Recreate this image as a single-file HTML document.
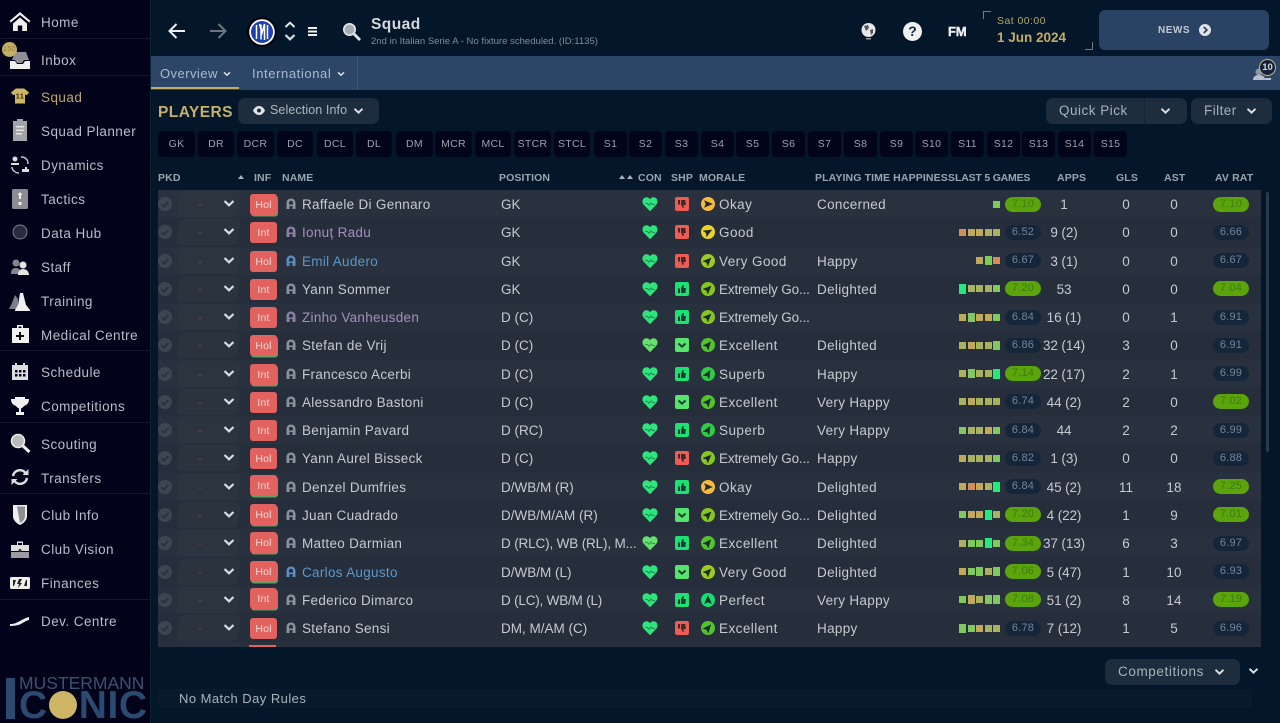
<!DOCTYPE html>
<html><head><meta charset="utf-8"><title>Squad</title>
<style>
html,body{margin:0;padding:0;width:1280px;height:723px;overflow:hidden;background:#03162a}
body{position:relative;font-family:"Liberation Sans","DejaVu Sans",sans-serif;color:#c6cad0;font-size:13.5px;letter-spacing:.45px;filter:blur(.35px)}
svg{display:block}
#side{position:absolute;left:0;top:0;width:150px;height:723px;background:#02021a}
.m{position:absolute;left:41px;margin-top:1px;color:#b9bcc6;font-size:13.5px;line-height:20px;white-space:nowrap;letter-spacing:.45px}
.ic{position:absolute;left:8px;width:24px;height:24px}
.hr{position:absolute;left:0;width:150px;height:1px;background:#15182d}
.h{position:absolute;top:172px;font-size:10.5px;font-weight:bold;color:#9aa4ae;line-height:12px;white-space:nowrap;letter-spacing:.12px}
.c{position:absolute;top:131px;height:26px;background:#02051a;border-radius:4px;color:#9aa2ac;font-size:10.5px;line-height:26px;text-align:center;letter-spacing:.3px}
.r{position:absolute;left:158px;width:1103px;height:28.27px;line-height:30px;background:#28313d;overflow:hidden}
.r.e{background:#252e3a}
.r>*{position:absolute;white-space:nowrap}
.k{left:0;top:7px;width:14px;height:14px}
.s{left:20px;top:1px;width:61px;height:26px;background:#2d3642;border-radius:5px;transform:skewX(-8deg);opacity:.75}
.d{left:40px;color:#8a3c3c;font-size:12px;line-height:28px}
.v{left:65px;top:9px;width:12px;height:9px}
.f{left:92px;top:4px;width:27px;height:21px;background:#e2625f;border-radius:3px;color:#f1d9d6;font-size:10.5px;line-height:22px;text-align:center;letter-spacing:.2px}
.f.g{box-shadow:1px 1.5px 0 #5f9f63}
.pi{left:127px;top:8px;width:12px;height:12px}
.n{left:144px;color:#c6cad0;letter-spacing:.3px}
.n.u{color:#a68fbe}.n.b{color:#5b97cc}
.p{left:343px;letter-spacing:0}
.he{left:484px;top:6px;width:16px;height:16px}
.sh{left:517px;top:7px;width:14px;height:14px}
.mi{left:543px;top:7px;width:14px;height:14px}
.mt{left:561px}
.z{letter-spacing:-.15px}
.pt{left:659px;letter-spacing:.32px}
.l{left:742px;top:0;width:100px;height:28px;display:flex;justify-content:flex-end;align-items:center;gap:1.5px}
.l i{display:block;width:7px;height:7px}
.o{background:#d68d54}.y{background:#c2a958}.w{background:#a9b25f}.q{background:#80c95c}.t{background:#22ea7c;height:10px!important}
.rt{left:847px;top:6.5px;width:36px;height:15px;border-radius:8px;background:#15263a;color:#75849a;font-size:11px;line-height:14px;text-align:center;letter-spacing:.2px}
.rt.G{background:#5ba40a;color:#3c7d10}
.rt.A{left:1055px}
.x{width:60px;text-align:center;letter-spacing:.1px}
.ap{left:876px;letter-spacing:-.1px}.gl{left:938px}.as{left:986px}
.btn{position:absolute;background:#1e2d3e;border-radius:7px;color:#aeb6bf;line-height:26px;height:26px;font-size:13.5px}
</style></head><body>
<svg width="0" height="0" style="position:absolute"><defs>
<symbol id="heart" viewBox="0 0 16 16"><path fill="#2fe47c" d="M8 15.2 1.6 8.6C-.3 6.4.2 2.8 2.8 1.6 4.900.7 6.900 1.500 8 3.200 9.100 1.500 11.100.7 13.200 1.600c2.600 1.200 3.100 4.800 1.200 7z"/><path fill="none" stroke="#1b8f55" stroke-width="1" d="M3 7.500h2.500l1.500 1.800 2-2.400 1.500 1.600H13"/></symbol>
<symbol id="heart2" viewBox="0 0 16 16"><path fill="#68e071" d="M8 15.200 1.600 8.600C-.3 6.400.2 2.800 2.800 1.600 4.900.7 6.900 1.500 8 3.200 9.100 1.500 11.100.7 13.200 1.600c2.600 1.200 3.100 4.800 1.200 7z"/><path fill="none" stroke="#37954a" stroke-width="1" d="M3 7.500h2.500l1.500 1.800 2-2.400 1.500 1.600H13"/></symbol>
<symbol id="up" viewBox="0 0 14 14"><rect width="14" height="14" rx="2" fill="#1be273"/><path fill="#1d3a36" d="M3 6.500h2v4.500H3zM6 6.500 7.700 3c.9 0 1.300.6 1.100 1.500L8.500 6H11l-.7 5H6z"/></symbol>
<symbol id="dn" viewBox="0 0 14 14"><rect width="14" height="14" rx="2" fill="#ee5c52"/><path fill="#3d2a2e" d="M3 3h2v4.500H3zM6 3h4.300L11 8H8.500l.3 1.500C9 10.400 8.600 11 7.700 11L6 7.500z"/></symbol>
<symbol id="mid" viewBox="0 0 14 14"><rect width="14" height="14" rx="2" fill="#55e46d"/><path fill="none" stroke="#1d3a36" stroke-width="2" d="M3.500 5.500 7 8.700l3.500-3.200"/></symbol>
<symbol id="nav" viewBox="0 0 14 14"><path fill="#1e2a30" d="M7 2.200 10.800 11 7 9.300 3.200 11z"/></symbol>
<symbol id="chev" viewBox="0 0 12 9"><path fill="none" stroke="#d8dde2" stroke-width="2.200" d="M1.500 2 6 6.300 10.500 2"/></symbol>
<symbol id="chk" viewBox="0 0 14 14"><circle cx="7" cy="7" r="7" fill="#3d4650"/><path fill="none" stroke="#28313d" stroke-width="1.800" d="M3.500 7.200 6 9.700 10.500 4.800"/></symbol>
<symbol id="per" viewBox="0 0 12 12"><path fill="#8a939d" d="M6 .5C3.200.5 1.500 2.500 1.500 5.200V11h3V8h3v3h3V5.200C10.500 2.500 8.800.5 6 .5zM4 6.500V5C4 3.800 4.800 2.800 6 2.800S8 3.800 8 5v1.500z"/></symbol>
<symbol id="perb" viewBox="0 0 12 12"><path fill="#5b8fc0" d="M6 .5C3.200.5 1.500 2.500 1.500 5.200V11h3V8h3v3h3V5.200C10.500 2.500 8.800.5 6 .5zM4 6.500V5C4 3.800 4.800 2.800 6 2.800S8 3.800 8 5v1.500z"/></symbol>
<symbol id="perp" viewBox="0 0 12 12"><path fill="#8f7ea6" d="M6 .5C3.200.5 1.500 2.500 1.500 5.200V11h3V8h3v3h3V5.200C10.500 2.500 8.800.5 6 .5zM4 6.500V5C4 3.800 4.800 2.800 6 2.800S8 3.800 8 5v1.500z"/></symbol>
</defs></svg>

<div id="side">
<svg class="ic" style="top:9px" viewBox="0 0 24 24"><path fill="#eee" d="M12 3 1.500 12l1.300 1.500L12 6l9.200 7.500 1.300-1.500zM5 14.500 12 8.500l7 6V22h-4.800v-5.500H9.800V22H5z"/></svg>
<div class="m" style="top:12px">Home</div><div class="hr" style="top:38px"></div>
<svg class="ic" style="top:47px" viewBox="0 0 24 24"><path fill="#eee" d="M2 14h5l2 3h6l2-3h5v8H2z"/><path fill="#8e8e96" d="M7 5h11l3 8h-5l-2 3h-5l-2-3H4z"/></svg>
<div style="position:absolute;left:2px;top:42px;width:15px;height:15px;border-radius:50%;background:#c4ad66;color:#927e40;font-size:7px;line-height:15px;text-align:center">150</div>
<div class="m" style="top:50px">Inbox</div><div class="hr" style="top:75px"></div>
<svg class="ic" style="top:86px;left:10px;width:20px;height:20px" viewBox="0 0 24 24"><path fill="#d0b565" d="M7 3h10l6 5-3 3-2-1v11H6V10l-2 1-3-3z"/><text x="12" y="15" fill="#3a3216" font-size="9" font-weight="bold" text-anchor="middle" font-family="Liberation Sans">11</text></svg>
<div class="m" style="top:87px;color:#bba96c">Squad</div>
<svg class="ic" style="top:117px" viewBox="0 0 24 24"><path fill="#a3a3a8" d="M5 4h4V2h6v2h4v20H5z"/><path fill="#e5e5e5" d="M8 9h8v1.500H8zM8 12.500h8V14H8zM8 16h6v1.500H8z"/></svg>
<div class="m" style="top:121px">Squad Planner</div>
<svg class="ic" style="top:153px" viewBox="0 0 24 24"><circle cx="7" cy="6" r="2.500" fill="#ddd"/><path fill="#ddd" d="M3 10h8v2H3zM14 16h3v-2h2v2h2v3h-7z"/><path fill="none" stroke="#c9c9cc" stroke-width="1.500" d="M13 4c4 0 7 2 7 7M4 14c0 3 3 6 7 6"/></svg>
<div class="m" style="top:155px">Dynamics</div>
<svg class="ic" style="top:187px" viewBox="0 0 24 24"><rect x="4" y="2" width="16" height="20" rx="1.500" fill="#8b8b91"/><path fill="#eee" d="M12 5l2.500 3H13v4h-2V8H9.500zM10.500 15h3v3h-3z"/></svg>
<div class="m" style="top:189px">Tactics</div>
<svg class="ic" style="top:220px" viewBox="0 0 24 24"><circle cx="12" cy="12" r="7" fill="#2b2b40" stroke="#7e7e8a" stroke-width="1"/></svg>
<div class="m" style="top:223px">Data Hub</div>
<svg class="ic" style="top:255px" viewBox="0 0 24 24"><circle cx="8" cy="8" r="3.500" fill="#85858c"/><path fill="#85858c" d="M3 19c0-5 2-6 5-6 2 0 3 .6 4 2l-2 4z"/><circle cx="15" cy="10" r="3.500" fill="#e5e5e5"/><path fill="#e5e5e5" d="M10 20c0-4 2-6 5-6s6 2 6 6z"/></svg>
<div class="m" style="top:257px">Staff</div>
<svg class="ic" style="top:289px" viewBox="0 0 24 24"><path fill="#7f7f86" d="M1 20 4 14l3-8 3 4v10z"/><path fill="#f0f0f0" d="M12 4h3l3 12 4 5v1H7v-1l3-5z"/></svg>
<div class="m" style="top:291px">Training</div><div class="hr" style="top:350px"></div>
<svg class="ic" style="top:322px" viewBox="0 0 24 24"><path fill="#f0f0f0" d="M9 3h6v3h6v15H4V6h5zm1.500 1.500V6h3V4.500z"/><path fill="#111" d="M11 10h2v3h3v2h-3v3h-2v-3H8v-2h3z"/></svg>
<div class="m" style="top:325px">Medical Centre</div>
<svg class="ic" style="top:360px" viewBox="0 0 24 24"><path fill="#ddd" d="M4 5h3V3h2v2h6V3h2v2h3v15H4z"/><path fill="#02021a" d="M7 10h2.500v2.500H7zM11 10h2.500v2.500H11zM15 10h2.500v2.500H15zM7 14h2.500v2.500H7zM11 14h2.500v2.500H11zM15 14h2.500v2.500H15z"/></svg>
<div class="m" style="top:362px">Schedule</div>
<svg class="ic" style="top:394px" viewBox="0 0 24 24"><path fill="#f0f0f0" d="M7 3h10v2h4c0 4-2 6-5 7-1 1.500-2 2-3 2.500V18h3v3H8v-3h3v-3.500c-1-.5-2-1-3-2.500-3-1-5-3-5-7h4z"/></svg>
<div class="m" style="top:396px">Competitions</div><div class="hr" style="top:422px"></div>
<svg class="ic" style="top:431px" viewBox="0 0 24 24"><circle cx="10" cy="10" r="6.500" fill="#bbb" stroke="#eee" stroke-width="1.500"/><path stroke="#eee" stroke-width="3" d="m15 15 6.500 6"/></svg>
<div class="m" style="top:434px">Scouting</div>
<svg class="ic" style="top:465px" viewBox="0 0 24 24"><path fill="none" stroke="#ddd" stroke-width="2.500" d="M5 11a7 7 0 0 1 12.500-3M19 13a7 7 0 0 1-12.500 3"/><path fill="#ddd" d="M20.500 4v6h-6zM3.500 20v-6h6z"/></svg>
<div class="m" style="top:468px">Transfers</div><div class="hr" style="top:493px"></div>
<svg class="ic" style="top:503px" viewBox="0 0 24 24"><path fill="#eee" d="M5 2h14v11c0 4-3 7-7 9-4-2-7-5-7-9z"/><path fill="#8d8d94" d="M9 3.500h8V13c0 3-2 5.500-5 7z"/></svg>
<div class="m" style="top:505px">Club Info</div>
<svg class="ic" style="top:537px" viewBox="0 0 24 24"><path fill="#ddd" d="M3 8h6V4.500h6V8h6v6H3zM10 6v2h4V6z"/><path fill="#9c9ca2" d="M3 15h18v6H3z"/><circle cx="12" cy="13.500" r="1.500" fill="#333"/></svg>
<div class="m" style="top:539px">Club Vision</div>
<svg class="ic" style="top:571px" viewBox="0 0 24 24"><rect x="2" y="6" width="20" height="12" rx="1.500" fill="#eee"/><path fill="#222" d="M5 9h3l-2 6H5zM19 9v6h-3l2-6zM11 8h3l-2 4h2l-4 5 1-4H9z"/></svg>
<div class="m" style="top:573px">Finances</div><div class="hr" style="top:599px"></div>
<svg class="ic" style="top:609px" viewBox="0 0 24 24"><path fill="#eee" d="M2 15c4 0 6-1 9-2.500C14 11 17 9 21 8v3c-4 1-6 3-9 4.500-3 1-6 1.500-10 1.500z"/></svg>
<div class="m" style="top:611px">Dev. Centre</div>
<div style="position:absolute;left:6px;top:678px;width:9px;height:41px;background:#2c4a70"></div>
<div style="position:absolute;left:19px;top:673px;color:#3a5270;font-size:17.5px;line-height:20px;letter-spacing:0;white-space:nowrap">MUSTERMANN</div>
<div style="position:absolute;left:19px;top:687px;color:#2c4a70;font-size:39px;line-height:38px;font-weight:bold;letter-spacing:.6px;white-space:nowrap">C<span style="opacity:0">O</span>NIC</div>
<div style="position:absolute;left:49px;top:691px;width:28px;height:28px;border-radius:50%;background:#cfb566"></div>
</div>
<div style="position:absolute;left:150px;top:0;width:1px;height:723px;background:#0b2233"></div>

<!-- top -->
<svg style="position:absolute;left:167px;top:22px" width="20" height="18" viewBox="0 0 20 18"><path fill="none" stroke="#eef0f2" stroke-width="2" d="M18 9H3M9.500 2 2.500 9l7 7"/></svg>
<svg style="position:absolute;left:208px;top:22px" width="20" height="18" viewBox="0 0 20 18"><path fill="none" stroke="#6d7680" stroke-width="2" d="M2 9h15M10.500 2l7 7-7 7"/></svg>
<svg style="position:absolute;left:247px;top:17px" width="30" height="30" viewBox="0 0 30 30"><circle cx="15" cy="15" r="15" fill="#03040c"/><circle cx="15" cy="15" r="12.800" fill="#fff"/><circle cx="15" cy="15" r="11" fill="#1e3fae"/><path fill="none" stroke="#fff" stroke-width="1.500" d="M9.500 8v14M12.500 7l2.500 9 2.500-9v16M20.500 8v14M14 7.500v15"/></svg>
<svg style="position:absolute;left:284px;top:20px" width="12" height="9" viewBox="0 0 12 9"><path fill="none" stroke="#e6e9ec" stroke-width="2" d="M1.500 7 6 2.700 10.500 7"/></svg>
<svg style="position:absolute;left:284px;top:33px" width="12" height="9" viewBox="0 0 12 9"><use href="#chev"/></svg>
<div style="position:absolute;left:308px;top:27px;width:9px;height:2px;background:#eee;box-shadow:0 3.500px 0 #eee,0 7px 0 #eee"></div>
<svg style="position:absolute;left:342px;top:22px" width="19" height="19" viewBox="0 0 19 19"><circle cx="7.500" cy="7.500" r="5.700" fill="#a7acb1" stroke="#e4e6e8" stroke-width="1.600"/><path stroke="#e4e6e8" stroke-width="2.800" d="m12 12 6 6"/></svg>
<div style="position:absolute;left:371px;top:16px;font-size:15.5px;font-weight:bold;line-height:18px;color:#d5d9dd">Squad</div>
<div style="position:absolute;left:371px;top:36px;font-size:9.5px;line-height:12px;color:#818d9b;white-space:nowrap;letter-spacing:.02px">2nd in Italian Serie A - No fixture scheduled. (ID:1135)</div>
<svg style="position:absolute;left:860px;top:22px" width="17" height="19" viewBox="0 0 17 19"><circle cx="8.500" cy="8" r="7" fill="#e8e8e8"/><path fill="#555" d="M4 4l4-1 1 3-3 3zM10 8l3-1 0 4-2 2z"/><path fill="#999" d="M6 16h5v1.500H6z"/></svg>
<div style="position:absolute;left:903px;top:22px;width:19px;height:19px;border-radius:50%;background:#eef0f2;color:#132638;font-weight:bold;font-size:14px;line-height:19px;text-align:center;letter-spacing:0">?</div>
<div style="position:absolute;left:948px;top:24px;font-size:13px;font-weight:bold;line-height:15px;color:#f2f2f2;letter-spacing:-.2px;-webkit-text-stroke:.4px #f2f2f2">FM</div>
<div style="position:absolute;left:983px;top:11px;width:7px;height:7px;border-left:1px solid #7a7b72;border-top:1px solid #7a7b72"></div>
<div style="position:absolute;left:1085px;top:42px;width:7px;height:7px;border-right:1px solid #7a7b72;border-bottom:1px solid #7a7b72"></div>
<div style="position:absolute;left:997px;top:15px;color:#b6a566;font-size:10.5px;line-height:12px;white-space:nowrap">Sat 00:00</div>
<div style="position:absolute;left:997px;top:30px;color:#c2ad63;font-size:13.5px;font-weight:bold;line-height:16px;white-space:nowrap;letter-spacing:0">1 Jun 2024</div>
<div style="position:absolute;left:1099px;top:10px;width:170px;height:40px;background:#2a4263;border-radius:6px"></div>
<div style="position:absolute;left:1158px;top:25px;color:#c0c8d2;font-size:10px;font-weight:bold;line-height:12px;letter-spacing:.5px">NEWS</div>
<svg style="position:absolute;left:1199px;top:24px" width="12" height="12" viewBox="0 0 12 12"><circle cx="6" cy="6" r="6" fill="#dfe3e8"/><path fill="none" stroke="#2b4266" stroke-width="1.800" d="M4.800 3 7.800 6l-3 3"/></svg>

<!-- subnav -->
<div style="position:absolute;left:151px;top:56px;width:1129px;height:34px;background:#2d4668"></div>
<div style="position:absolute;left:151px;top:86.5px;width:88px;height:2.5px;background:#c5ad66"></div>
<div style="position:absolute;left:356.5px;top:56px;width:1px;height:34px;background:#3f5878"></div>
<div style="position:absolute;left:160px;top:65px;line-height:17px;font-size:13px;color:#a9bacb">Overview</div>
<svg style="position:absolute;left:223px;top:71px" width="8" height="6" viewBox="0 0 12 9"><use href="#chev"/></svg>
<div style="position:absolute;left:252px;top:65px;line-height:17px;font-size:13px;color:#a9bacb;letter-spacing:.6px">International</div>
<svg style="position:absolute;left:337px;top:71px" width="8" height="6" viewBox="0 0 12 9"><use href="#chev"/></svg>
<svg style="position:absolute;left:1252px;top:65px" width="20" height="16" viewBox="0 0 20 16"><circle cx="7" cy="7" r="3.500" fill="#8b97a5"/><path fill="#b9c0c8" d="M1 15c0-3 2-5 6-5s6 2 6 5zM13 13h6v2h-6z"/></svg>
<div style="position:absolute;left:1259px;top:59px;width:15px;height:15px;border:1.5px solid #c9b36a;border-radius:50%;background:#132238;color:#d5d8dc;font-size:9.5px;font-weight:bold;line-height:15px;text-align:center;letter-spacing:0">10</div>

<!-- heading row -->
<div style="position:absolute;left:158px;top:104px;color:#c6b06a;font-size:15.5px;font-weight:bold;line-height:18px;letter-spacing:.45px">PLAYERS</div>
<div class="btn" style="left:238px;top:98px;width:141px"></div>
<svg style="position:absolute;left:253px;top:106px" width="12" height="9" viewBox="0 0 12 9"><path fill="#e3e6e9" d="M6 0c3 0 5 2.500 6 4.500C11 6.500 9 9 6 9S1 6.500 0 4.500C1 2.500 3 0 6 0z"/><circle cx="6" cy="4.500" r="2" fill="#1e2d3e"/></svg>
<div style="position:absolute;left:270px;top:102px;font-size:12.5px;line-height:16px;color:#aeb6bf;white-space:nowrap;letter-spacing:.1px">Selection Info</div>
<svg style="position:absolute;left:353px;top:107px" width="11" height="8" viewBox="0 0 12 9"><use href="#chev"/></svg>
<div class="btn" style="left:1046px;top:98px;width:141px"></div>
<div style="position:absolute;left:1144px;top:98px;width:1px;height:26px;background:#162333"></div>
<div style="position:absolute;left:1059px;top:102px;font-size:13.5px;line-height:17px;color:#a9b1ba;white-space:nowrap;letter-spacing:.5px">Quick Pick</div>
<svg style="position:absolute;left:1160px;top:107px" width="11" height="8" viewBox="0 0 12 9"><use href="#chev"/></svg>
<div class="btn" style="left:1191px;top:98px;width:81px"></div>
<div style="position:absolute;left:1204px;top:102px;font-size:13.5px;line-height:17px;color:#a9b1ba">Filter</div>
<svg style="position:absolute;left:1246px;top:107px" width="11" height="8" viewBox="0 0 12 9"><use href="#chev"/></svg>

<!-- chips -->
<div class="c" style="left:158px;width:37px">GK</div><div class="c" style="left:198px;width:36px">DR</div><div class="c" style="left:237px;width:37px">DCR</div><div class="c" style="left:277px;width:36px">DC</div><div class="c" style="left:317px;width:36px">DCL</div><div class="c" style="left:356px;width:36px">DL</div><div class="c" style="left:396px;width:37px">DM</div><div class="c" style="left:435px;width:37px">MCR</div><div class="c" style="left:475px;width:36px">MCL</div><div class="c" style="left:514px;width:37px">STCR</div><div class="c" style="left:554px;width:36px">STCL</div>
<div class="c" style="left:594px;width:33px">S1</div><div class="c" style="left:629px;width:33px">S2</div><div class="c" style="left:665px;width:33px">S3</div><div class="c" style="left:701px;width:33px">S4</div><div class="c" style="left:736px;width:33px">S5</div><div class="c" style="left:772px;width:33px">S6</div><div class="c" style="left:808px;width:33px">S7</div><div class="c" style="left:844px;width:33px">S8</div><div class="c" style="left:880px;width:33px">S9</div><div class="c" style="left:915px;width:33px">S10</div><div class="c" style="left:951px;width:33px">S11</div><div class="c" style="left:987px;width:33px">S12</div><div class="c" style="left:1022px;width:33px">S13</div><div class="c" style="left:1058px;width:33px">S14</div><div class="c" style="left:1094px;width:33px">S15</div>

<!-- table header -->
<div class="h" style="left:158px">PKD</div>
<div style="position:absolute;left:238px;top:175px;border:3.5px solid transparent;border-top:0;border-bottom:4px solid #aab2ba"></div>
<div class="h" style="left:254px">INF</div><div class="h" style="left:282px">NAME</div><div class="h" style="left:499px">POSITION</div>
<div style="position:absolute;left:619px;top:175px;border:3.5px solid transparent;border-top:0;border-bottom:4px solid #aab2ba"></div>
<div style="position:absolute;left:627px;top:175px;border:3.5px solid transparent;border-top:0;border-bottom:4px solid #aab2ba"></div>
<div class="h" style="left:638px">CON</div><div class="h" style="left:671px">SHP</div><div class="h" style="left:699px">MORALE</div><div class="h" style="left:815px">PLAYING TIME HAPPINESS</div><div class="h" style="left:955px;letter-spacing:-.2px">LAST 5 GAMES</div><div class="h" style="left:1057px">APPS</div><div class="h" style="left:1116px">GLS</div><div class="h" style="left:1164px">AST</div><div class="h" style="left:1215px">AV RAT</div>

<!-- rows -->
<div style="position:absolute;left:158px;top:190px;width:1103px;height:457px;background:#28313d"></div>
<div style="position:absolute;left:249px;top:645px;width:27px;height:2px;background:#e2625f"></div>

<div class="r" style="top:190px"><svg class="k"><use href="#chk"/></svg><div class="s"></div><div class="d">-</div><svg class="v"><use href="#chev"/></svg><div class="f g">Hol</div><svg class="pi"><use href="#per"/></svg><div class="n">Raffaele Di Gennaro</div><div class="p">GK</div><svg class="he"><use href="#heart"/></svg><svg class="sh"><use href="#dn"/></svg><svg class="mi" viewBox="0 0 14 14"><circle cx="7" cy="7" r="7" fill="#f5bb3f"/><use href="#nav" transform="rotate(90 7 7)"/></svg><div class="mt">Okay</div><div class="pt">Concerned</div><div class="l"><i class="q"></i></div><div class="rt G">7.10</div><div class="x ap">1</div><div class="x gl">0</div><div class="x as">0</div><div class="rt A G">7.10</div></div>

<div class="r e" style="top:218.27px"><svg class="k"><use href="#chk"/></svg><div class="s"></div><div class="d">-</div><svg class="v"><use href="#chev"/></svg><div class="f">Int</div><svg class="pi"><use href="#perp"/></svg><div class="n u">Ionuț Radu</div><div class="p">GK</div><svg class="he"><use href="#heart"/></svg><svg class="sh"><use href="#dn"/></svg><svg class="mi" viewBox="0 0 14 14"><circle cx="7" cy="7" r="7" fill="#e9d32a"/><use href="#nav" transform="rotate(60 7 7)"/></svg><div class="mt">Good</div><div class="l"><i class="o"></i><i class="y"></i><i class="y"></i><i class="w"></i><i class="w"></i></div><div class="rt">6.52</div><div class="x ap">9 (2)</div><div class="x gl">0</div><div class="x as">0</div><div class="rt A">6.66</div></div>

<div class="r" style="top:246.54px"><svg class="k"><use href="#chk"/></svg><div class="s"></div><div class="d">-</div><svg class="v"><use href="#chev"/></svg><div class="f">Hol</div><svg class="pi"><use href="#perb"/></svg><div class="n b">Emil Audero</div><div class="p">GK</div><svg class="he"><use href="#heart"/></svg><svg class="sh"><use href="#dn"/></svg><svg class="mi" viewBox="0 0 14 14"><circle cx="7" cy="7" r="7" fill="#9ccb1f"/><use href="#nav" transform="rotate(45 7 7)"/></svg><div class="mt">Very Good</div><div class="pt">Happy</div><div class="l"><i class="y"></i><i class="q" style="height:9px"></i><i class="o"></i></div><div class="rt">6.67</div><div class="x ap">3 (1)</div><div class="x gl">0</div><div class="x as">0</div><div class="rt A">6.67</div></div>

<div class="r e" style="top:274.81px"><svg class="k"><use href="#chk"/></svg><div class="s"></div><div class="d">-</div><svg class="v"><use href="#chev"/></svg><div class="f">Int</div><svg class="pi"><use href="#per"/></svg><div class="n">Yann Sommer</div><div class="p">GK</div><svg class="he"><use href="#heart"/></svg><svg class="sh"><use href="#up"/></svg><svg class="mi" viewBox="0 0 14 14"><circle cx="7" cy="7" r="7" fill="#86c61e"/><use href="#nav" transform="rotate(45 7 7)"/></svg><div class="mt z">Extremely Go...</div><div class="pt">Delighted</div><div class="l"><i class="t"></i><i class="w"></i><i class="w"></i><i class="w"></i><i class="q"></i></div><div class="rt G">7.20</div><div class="x ap">53</div><div class="x gl">0</div><div class="x as">0</div><div class="rt A G">7.04</div></div>

<div class="r" style="top:303.08px"><svg class="k"><use href="#chk"/></svg><div class="s"></div><div class="d">-</div><svg class="v"><use href="#chev"/></svg><div class="f">Int</div><svg class="pi"><use href="#perp"/></svg><div class="n u">Zinho Vanheusden</div><div class="p">D (C)</div><svg class="he"><use href="#heart"/></svg><svg class="sh"><use href="#up"/></svg><svg class="mi" viewBox="0 0 14 14"><circle cx="7" cy="7" r="7" fill="#86c61e"/><use href="#nav" transform="rotate(45 7 7)"/></svg><div class="mt z">Extremely Go...</div><div class="l"><i class="y"></i><i class="q" style="height:9px"></i><i class="y"></i><i class="y"></i><i class="q"></i></div><div class="rt">6.84</div><div class="x ap">16 (1)</div><div class="x gl">0</div><div class="x as">1</div><div class="rt A">6.91</div></div>

<div class="r e" style="top:331.35px"><svg class="k"><use href="#chk"/></svg><div class="s"></div><div class="d">-</div><svg class="v"><use href="#chev"/></svg><div class="f g">Hol</div><svg class="pi"><use href="#per"/></svg><div class="n">Stefan de Vrij</div><div class="p">D (C)</div><svg class="he"><use href="#heart2"/></svg><svg class="sh"><use href="#mid"/></svg><svg class="mi" viewBox="0 0 14 14"><circle cx="7" cy="7" r="7" fill="#52c42b"/><use href="#nav" transform="rotate(40 7 7)"/></svg><div class="mt">Excellent</div><div class="pt">Delighted</div><div class="l"><i class="w"></i><i class="y"></i><i class="w"></i><i class="w"></i><i class="q" style="height:9px"></i></div><div class="rt">6.86</div><div class="x ap">32 (14)</div><div class="x gl">3</div><div class="x as">0</div><div class="rt A">6.91</div></div>

<div class="r" style="top:359.62px"><svg class="k"><use href="#chk"/></svg><div class="s"></div><div class="d">-</div><svg class="v"><use href="#chev"/></svg><div class="f g">Int</div><svg class="pi"><use href="#per"/></svg><div class="n">Francesco Acerbi</div><div class="p">D (C)</div><svg class="he"><use href="#heart"/></svg><svg class="sh"><use href="#up"/></svg><svg class="mi" viewBox="0 0 14 14"><circle cx="7" cy="7" r="7" fill="#2fcc44"/><use href="#nav" transform="rotate(30 7 7)"/></svg><div class="mt">Superb</div><div class="pt">Happy</div><div class="l"><i class="w"></i><i class="q" style="height:9px"></i><i class="w"></i><i class="w"></i><i class="t"></i></div><div class="rt G">7.14</div><div class="x ap">22 (17)</div><div class="x gl">2</div><div class="x as">1</div><div class="rt A">6.99</div></div>

<div class="r e" style="top:387.89px"><svg class="k"><use href="#chk"/></svg><div class="s"></div><div class="d">-</div><svg class="v"><use href="#chev"/></svg><div class="f">Int</div><svg class="pi"><use href="#per"/></svg><div class="n">Alessandro Bastoni</div><div class="p">D (C)</div><svg class="he"><use href="#heart"/></svg><svg class="sh"><use href="#mid"/></svg><svg class="mi" viewBox="0 0 14 14"><circle cx="7" cy="7" r="7" fill="#52c42b"/><use href="#nav" transform="rotate(40 7 7)"/></svg><div class="mt">Excellent</div><div class="pt">Very Happy</div><div class="l"><i class="w"></i><i class="y"></i><i class="w"></i><i class="w"></i><i class="w"></i></div><div class="rt">6.74</div><div class="x ap">44 (2)</div><div class="x gl">2</div><div class="x as">0</div><div class="rt A G">7.02</div></div>

<div class="r" style="top:416.16px"><svg class="k"><use href="#chk"/></svg><div class="s"></div><div class="d">-</div><svg class="v"><use href="#chev"/></svg><div class="f">Int</div><svg class="pi"><use href="#per"/></svg><div class="n">Benjamin Pavard</div><div class="p">D (RC)</div><svg class="he"><use href="#heart"/></svg><svg class="sh"><use href="#up"/></svg><svg class="mi" viewBox="0 0 14 14"><circle cx="7" cy="7" r="7" fill="#2fcc44"/><use href="#nav" transform="rotate(30 7 7)"/></svg><div class="mt">Superb</div><div class="pt">Very Happy</div><div class="l"><i class="q"></i><i class="w"></i><i class="w"></i><i class="y"></i><i class="q"></i></div><div class="rt">6.84</div><div class="x ap">44</div><div class="x gl">2</div><div class="x as">2</div><div class="rt A">6.99</div></div>

<div class="r e" style="top:444.43px"><svg class="k"><use href="#chk"/></svg><div class="s"></div><div class="d">-</div><svg class="v"><use href="#chev"/></svg><div class="f">Hol</div><svg class="pi"><use href="#per"/></svg><div class="n">Yann Aurel Bisseck</div><div class="p">D (C)</div><svg class="he"><use href="#heart"/></svg><svg class="sh"><use href="#dn"/></svg><svg class="mi" viewBox="0 0 14 14"><circle cx="7" cy="7" r="7" fill="#86c61e"/><use href="#nav" transform="rotate(45 7 7)"/></svg><div class="mt z">Extremely Go...</div><div class="pt">Happy</div><div class="l"><i class="y"></i><i class="w"></i><i class="w"></i><i class="w"></i><i class="q"></i></div><div class="rt">6.82</div><div class="x ap">1 (3)</div><div class="x gl">0</div><div class="x as">0</div><div class="rt A">6.88</div></div>

<div class="r" style="top:472.7px"><svg class="k"><use href="#chk"/></svg><div class="s"></div><div class="d">-</div><svg class="v"><use href="#chev"/></svg><div class="f g" style="top:2px">Int</div><svg class="pi"><use href="#per"/></svg><div class="n">Denzel Dumfries</div><div class="p">D/WB/M (R)</div><svg class="he"><use href="#heart"/></svg><svg class="sh"><use href="#up"/></svg><svg class="mi" viewBox="0 0 14 14"><circle cx="7" cy="7" r="7" fill="#f5bb3f"/><use href="#nav" transform="rotate(90 7 7)"/></svg><div class="mt">Okay</div><div class="pt">Delighted</div><div class="l"><i class="y"></i><i class="o"></i><i class="y"></i><i class="w"></i><i class="t"></i></div><div class="rt">6.84</div><div class="x ap">45 (2)</div><div class="x gl">11</div><div class="x as">18</div><div class="rt A G">7.25</div></div>

<div class="r e" style="top:500.97px"><svg class="k"><use href="#chk"/></svg><div class="s"></div><div class="d">-</div><svg class="v"><use href="#chev"/></svg><div class="f g" style="top:3px">Hol</div><svg class="pi"><use href="#per"/></svg><div class="n">Juan Cuadrado</div><div class="p">D/WB/M/AM (R)</div><svg class="he"><use href="#heart"/></svg><svg class="sh"><use href="#mid"/></svg><svg class="mi" viewBox="0 0 14 14"><circle cx="7" cy="7" r="7" fill="#86c61e"/><use href="#nav" transform="rotate(45 7 7)"/></svg><div class="mt z">Extremely Go...</div><div class="pt">Delighted</div><div class="l"><i class="q"></i><i class="y"></i><i class="y"></i><i class="t"></i><i class="w"></i></div><div class="rt G">7.20</div><div class="x ap">4 (22)</div><div class="x gl">1</div><div class="x as">9</div><div class="rt A G">7.01</div></div>

<div class="r" style="top:529.24px"><svg class="k"><use href="#chk"/></svg><div class="s"></div><div class="d">-</div><svg class="v"><use href="#chev"/></svg><div class="f g" style="top:3px">Hol</div><svg class="pi"><use href="#per"/></svg><div class="n">Matteo Darmian</div><div class="p" style="letter-spacing:-.15px">D (RLC), WB (RL), M...</div><svg class="he"><use href="#heart2"/></svg><svg class="sh"><use href="#up"/></svg><svg class="mi" viewBox="0 0 14 14"><circle cx="7" cy="7" r="7" fill="#52c42b"/><use href="#nav" transform="rotate(40 7 7)"/></svg><div class="mt">Excellent</div><div class="pt">Delighted</div><div class="l"><i class="w"></i><i class="q"></i><i class="q"></i><i class="t"></i><i class="q"></i></div><div class="rt G">7.34</div><div class="x ap">37 (13)</div><div class="x gl">6</div><div class="x as">3</div><div class="rt A">6.97</div></div>

<div class="r e" style="top:557.51px"><svg class="k"><use href="#chk"/></svg><div class="s"></div><div class="d">-</div><svg class="v"><use href="#chev"/></svg><div class="f g" style="top:3px">Hol</div><svg class="pi"><use href="#perb"/></svg><div class="n b">Carlos Augusto</div><div class="p">D/WB/M (L)</div><svg class="he"><use href="#heart"/></svg><svg class="sh"><use href="#mid"/></svg><svg class="mi" viewBox="0 0 14 14"><circle cx="7" cy="7" r="7" fill="#9ccb1f"/><use href="#nav" transform="rotate(45 7 7)"/></svg><div class="mt">Very Good</div><div class="pt">Delighted</div><div class="l"><i class="y"></i><i class="q"></i><i class="q" style="height:9px"></i><i class="w"></i><i class="q" style="height:9px"></i></div><div class="rt G">7.06</div><div class="x ap">5 (47)</div><div class="x gl">1</div><div class="x as">10</div><div class="rt A">6.93</div></div>

<div class="r" style="top:585.78px"><svg class="k"><use href="#chk"/></svg><div class="s"></div><div class="d">-</div><svg class="v"><use href="#chev"/></svg><div class="f g" style="top:2px">Int</div><svg class="pi"><use href="#per"/></svg><div class="n">Federico Dimarco</div><div class="p" style="letter-spacing:-.2px">D (LC), WB/M (L)</div><svg class="he"><use href="#heart"/></svg><svg class="sh"><use href="#up"/></svg><svg class="mi" viewBox="0 0 14 14"><circle cx="7" cy="7" r="7" fill="#12e06f"/><use href="#nav"/></svg><div class="mt">Perfect</div><div class="pt">Very Happy</div><div class="l"><i class="q"></i><i class="y" style="height:9px"></i><i class="w"></i><i class="q" style="height:9px"></i><i class="q" style="height:9px"></i></div><div class="rt G">7.08</div><div class="x ap">51 (2)</div><div class="x gl">8</div><div class="x as">14</div><div class="rt A G">7.19</div></div>

<div class="r e" style="top:614.05px"><svg class="k"><use href="#chk"/></svg><div class="s"></div><div class="d">-</div><svg class="v"><use href="#chev"/></svg><div class="f">Hol</div><svg class="pi"><use href="#per"/></svg><div class="n">Stefano Sensi</div><div class="p">DM, M/AM (C)</div><svg class="he"><use href="#heart"/></svg><svg class="sh"><use href="#dn"/></svg><svg class="mi" viewBox="0 0 14 14"><circle cx="7" cy="7" r="7" fill="#52c42b"/><use href="#nav" transform="rotate(40 7 7)"/></svg><div class="mt">Excellent</div><div class="pt">Happy</div><div class="l"><i class="q" style="height:9px"></i><i class="q"></i><i class="y"></i><i class="w"></i><i class="w"></i></div><div class="rt">6.78</div><div class="x ap">7 (12)</div><div class="x gl">1</div><div class="x as">5</div><div class="rt A">6.96</div></div>

<!-- scrollbar -->
<div style="position:absolute;left:1266px;top:192px;width:3px;height:260px;background:#2a3a4c;border-radius:2px"></div>

<!-- footer -->
<div class="btn" style="left:1105px;top:659px;width:135px"></div>
<div style="position:absolute;left:1118px;top:663px;font-size:13.5px;line-height:17px;color:#a9b1ba;letter-spacing:.6px">Competitions</div>
<svg style="position:absolute;left:1214px;top:668px" width="11" height="8" viewBox="0 0 12 9"><use href="#chev"/></svg>
<svg style="position:absolute;left:1248px;top:667px" width="11" height="8" viewBox="0 0 12 9"><use href="#chev"/></svg>
<div style="position:absolute;left:158px;top:689px;width:1094px;height:19px;background:#071b2d;border-radius:4px"></div>
<div style="position:absolute;left:179px;top:690px;font-size:13px;line-height:17px;color:#aab2bb">No Match Day Rules</div>
</body></html>
